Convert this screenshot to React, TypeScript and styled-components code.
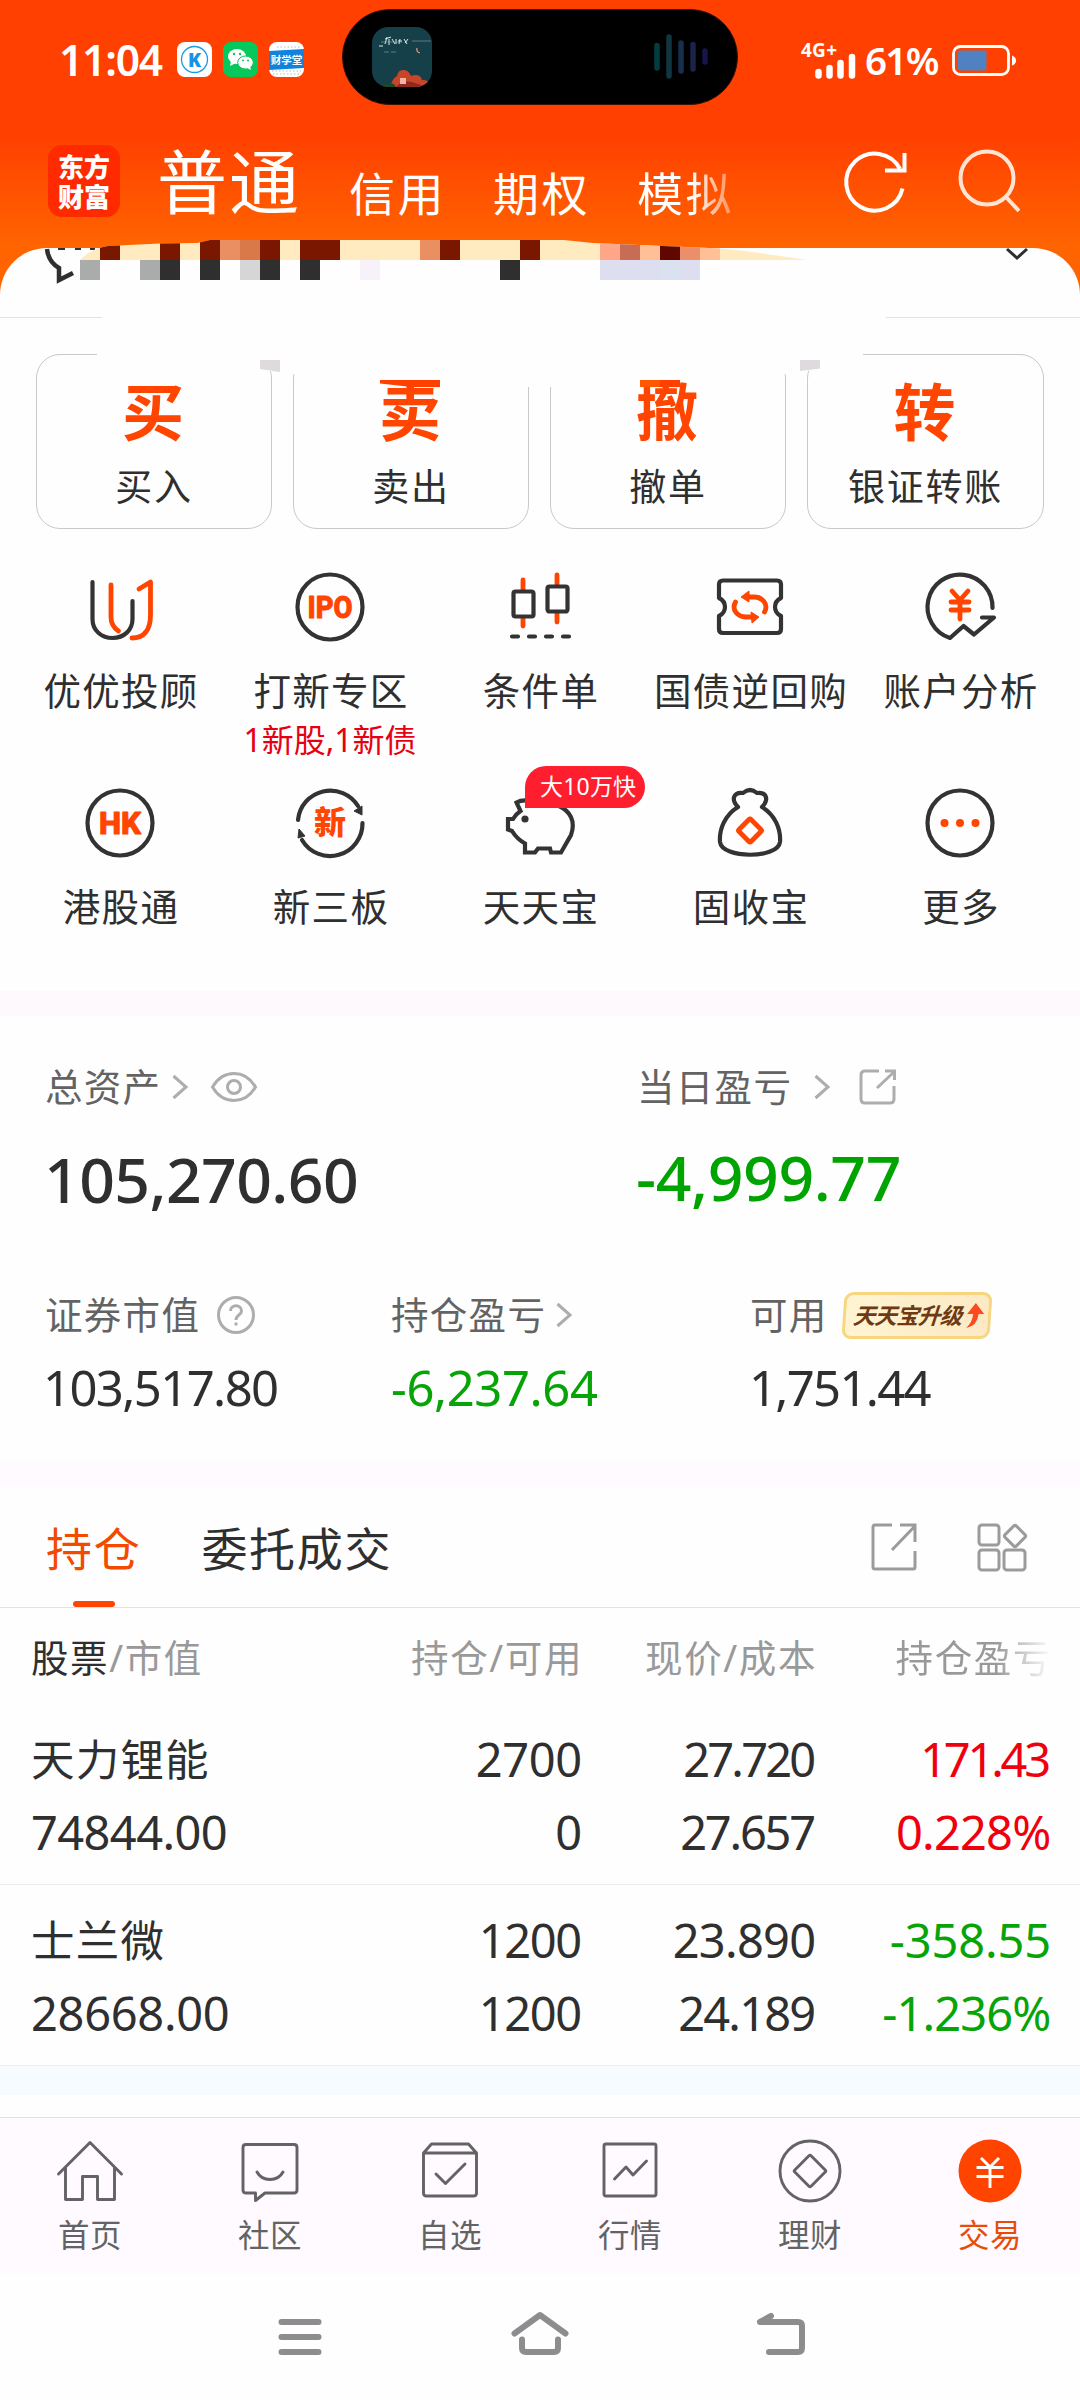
import React from "react";
import styled, { createGlobalStyle } from "styled-components";

const FONT = '"Noto Sans", "Noto Sans CJK SC", sans-serif';
const CJK = '"Noto Sans CJK SC", sans-serif';
const INK = "#2f2f2f";
const ORANGE = "#ff4500";
const GREEN = "#07a407";
const RED = "#f0000c";

const GlobalStyle = createGlobalStyle`
  * { box-sizing: border-box; }
  body { margin: 0; background: #fff; font-family: ${FONT}; color: ${INK}; }
`;

const Screen = styled.div`
  width: 1080px;
  height: 2400px;
  overflow: hidden;
  display: flex;
  flex-direction: column;
  background: linear-gradient(#ff4000 0, #ff4000 135px, #ff6400 245px, #ff6400 400px);
`;

const Text = styled.span<{ size: number; lh?: number; color?: string; weight?: number; ls?: number; dy?: number; dx?: number }>`
  display: block;
  white-space: nowrap;
  font-size: ${(p) => p.size}px;
  line-height: ${(p) => p.lh ?? 50}px;
  color: ${(p) => p.color ?? INK};
  font-weight: ${(p) => p.weight ?? 400};
  letter-spacing: ${(p) => p.ls ?? 0}px;
  margin-top: ${(p) => p.dy ?? 0}px;
  margin-bottom: ${(p) => -(p.dy ?? 0)}px;
  margin-left: ${(p) => p.dx ?? 0}px;
`;

/* ---------- status bar ---------- */
const StatusBar = styled.div`
  height: 105px;
  padding: 9px 64px 0 59px;
  display: flex;
  align-items: flex-start;
`;
const StatusLeft = styled.div`
  width: 283px;
  height: 101px;
  display: flex;
  align-items: center;
`;
const Clock = styled.div`
  width: 118px;
  font-size: 42.5px;
  font-weight: 600;
  letter-spacing: -1.2px;
  line-height: 60px;
  color: #fff;
`;
const AppIcon = styled.svg`
  width: 35px;
  height: 35px;
  margin-right: 11px;
`;
const Island = styled.div`
  width: 396px;
  height: 96px;
  border-radius: 48px;
  background: #000;
  border: 1px solid #3a1206;
  display: flex;
  align-items: center;
  justify-content: space-between;
  padding: 0 28px 0 29px;
`;
const StatusRight = styled.div`
  flex: 1;
  height: 101px;
  display: flex;
  align-items: center;
  justify-content: flex-end;
`;
const Signal = styled.svg`
  width: 56px;
  height: 40px;
  margin-right: 8px;
  overflow: visible;
`;
const Percent = styled.div`
  width: 73px;
  margin-right: 14px;
  font-size: 38.5px;
  font-weight: 600;
  letter-spacing: -1.7px;
  line-height: 60px;
  color: #fff;
`;

/* ---------- title bar ---------- */
const TitleBar = styled.div`
  height: 143px;
  display: flex;
  align-items: flex-start;
  padding: 40px 0 0 48px;
`;
const Logo = styled.div`
  flex: none;
  width: 72px;
  height: 72px;
  border-radius: 14px;
  background: #ff2a00;
  padding-top: 6px;
  text-align: center;
  font: 900 26px/30px ${CJK};
  color: #fff;
`;
const Modes = styled.div`
  flex: none;
  width: 679px;
  margin-left: 37px;
  display: flex;
  color: #fff;
`;
const MainMode = styled.div`
  width: 192px;
  font-size: 70px;
  line-height: 76px;
  letter-spacing: 2px;
  margin-top: -1px;
`;
const Mode = styled.div<{ fade?: boolean }>`
  width: 144px;
  font-size: 46px;
  line-height: 60px;
  letter-spacing: 2.5px;
  margin-top: 18px;
  ${(p) => p.fade && "color: transparent; background: linear-gradient(90deg, #fff 55px, rgba(255,255,255,.35) 95px); -webkit-background-clip: text; background-clip: text;"}
`;
const TitleIcon = styled.svg`
  width: 72px;
  height: 72px;
  margin-right: 40px;
  flex: none;
`;

/* ---------- white panel ---------- */
const Panel = styled.div`
  flex: 1;
  background: #fefefe;
  border-radius: 47px 47px 0 0;
  display: flex;
  flex-direction: column;
  position: relative;
`;
const NoticeRow = styled.div`
  height: 70px;
  display: flex;
  align-items: flex-end;
  justify-content: space-between;
`;
const Rule = styled.div<{ w: number }>`
  width: ${(p) => p.w}px;
  height: 1px;
  background: #e3e3e3;
`;
const Overlay = styled.svg`
  position: absolute;
  left: 0;
  top: -8px;
  width: 1080px;
  height: 160px;
`;
const Cards = styled.div`
  display: grid;
  grid-template-columns: 236px 236px 236px 237px;
  gap: 21px;
  padding: 36px 0 0 36px;
`;
const Card = styled.div`
  height: 175px;
  border: 1px solid #c9c9c9;
  border-radius: 24px;
  display: flex;
  flex-direction: column;
  align-items: center;
`;
const CardGlyph = styled.div`
  height: 70px;
  margin: 22px 2px 0 0;
  font: 600 62px/70px ${FONT};
  color: ${ORANGE};
`;
const CardLabel = styled.div`
  margin-top: 15px;
  font-size: 37px;
  line-height: 50px;
  letter-spacing: 1.7px;
`;

const Services = styled.div`
  height: 424px;
  margin-top: 38px;
  padding: 0 15px;
  display: grid;
  grid-template-columns: repeat(5, 210px);
  grid-auto-rows: 216px;
`;
const Service = styled.div`
  position: relative;
  display: flex;
  flex-direction: column;
  align-items: center;
`;
const ServiceIcon = styled.svg`
  width: 80px;
  height: 80px;
  margin-bottom: 20px;
`;
const Bubble = styled.div`
  position: absolute;
  left: 90px;
  top: -17px;
  width: 120px;
  height: 42px;
  border-radius: 21px 21px 21px 0;
  background: #ff1e2e;
  padding-left: 15px;
  font-size: 23px;
  line-height: 41px;
  letter-spacing: 0.2px;
  white-space: nowrap;
  color: #fff;
`;
const Band = styled.div<{ h: number; bg: string }>`
  height: ${(p) => p.h}px;
  background: ${(p) => p.bg};
`;

/* ---------- assets ---------- */
const Assets = styled.div`
  height: 445px;
  padding: 46px 0 0 45px;
`;
const AssetGrid = styled.div<{ cols: string; mt?: number }>`
  display: grid;
  grid-template-columns: ${(p) => p.cols};
  margin-top: ${(p) => p.mt ?? 0}px;
`;
const Label = styled.div`
  height: 50px;
  display: flex;
  align-items: center;
`;
const Glyph = styled.svg<{ w: number; h: number; ml: number }>`
  width: ${(p) => p.w}px;
  height: ${(p) => p.h}px;
  margin-left: ${(p) => p.ml}px;
  flex: none;
  overflow: visible;
`;
const Promo = styled.div`
  width: 148px;
  height: 47px;
  margin-left: 15px;
  padding-left: 7px;
  display: flex;
  align-items: center;
  border: 3px solid #f8d680;
  border-radius: 9px;
  background: linear-gradient(90deg, #fff4d2, #fde9c4);
  transform: skewX(-4deg);
`;
const PromoText = styled.span`
  width: 109px;
  font: italic 700 22.5px/40px ${FONT};
  letter-spacing: -0.8px;
  color: #6e3a12;
  white-space: nowrap;
`;

/* ---------- holdings ---------- */
const Tabs = styled.div`
  height: 121px;
  padding: 0 53px 0 46px;
  display: flex;
  border-bottom: 1px solid #e2e2e2;
`;
const Tab = styled.div<{ active?: boolean }>`
  display: flex;
  flex-direction: column;
  align-items: center;
  margin-right: 60px;
  padding-top: 31px;
  font-size: 46px;
  line-height: 60px;
  letter-spacing: 1.7px;
  color: ${(p) => (p.active ? "#f34a00" : INK)};
  &::after {
    content: "";
    width: 42px;
    height: 6px;
    margin-top: 23px;
    border-radius: 3px;
    background: ${(p) => (p.active ? "#ff4500" : "transparent")};
  }
`;
const TabTools = styled.div`
  margin-left: auto;
  padding-top: 35px;
  display: flex;
`;
const HoldRow = styled.div<{ head?: boolean }>`
  height: ${(p) => (p.head ? 96 : 181)}px;
  padding: ${(p) => (p.head ? "0" : "19px")} 31px 0;
  display: grid;
  grid-template-columns: 200px 349px 234px 235px;
  border-bottom: ${(p) => (p.head ? 0 : 1)}px solid #ebebed;
`;
const Cell = styled.div<{ left?: boolean }>`
  display: flex;
  flex-direction: column;
  align-items: ${(p) => (p.left ? "flex-start" : "flex-end")};
`;
const HeadText = styled.div<{ fade?: boolean }>`
  font-size: 37.5px;
  line-height: 99px;
  letter-spacing: 1.6px;
  margin-right: -3px;
  white-space: nowrap;
  color: #9a9999;
  ${(p) => p.fade && "color: transparent; background: linear-gradient(90deg, #9a9999 100px, rgba(154,153,153,.1) 150px); -webkit-background-clip: text; background-clip: text;"}
  b { font-weight: 400; color: ${INK}; }
`;
const Figure = styled.div<{ ls: number; color?: string }>`
  font-size: 47px;
  line-height: 73px;
  white-space: nowrap;
  color: ${(p) => p.color ?? INK};
  letter-spacing: ${(p) => p.ls}px;
  margin-right: ${(p) => -p.ls - 2.2}px;
`;

/* ---------- bottom bars ---------- */
const TabBar = styled.div`
  height: 156px;
  border-top: 1px solid #e4e1e4;
  background: #fefaff;
  display: grid;
  grid-template-columns: repeat(6, 180px);
`;
const NavItem = styled.div<{ active?: boolean }>`
  display: flex;
  flex-direction: column;
  align-items: center;
  padding-top: 13px;
  font-size: 31.5px;
  line-height: 50px;
  letter-spacing: 0.6px;
  color: ${(p) => (p.active ? "#e84d08" : "#636363")};
`;
const NavIcon = styled.svg`
  width: 80px;
  height: 80px;
  margin-bottom: -1px;
`;
const SystemNav = styled.div`
  height: 127px;
  padding: 24px 260px 0;
  display: flex;
  justify-content: space-between;
`;

const dark = { fill: "none", stroke: "#333", strokeWidth: 4.2, strokeLinecap: "round" as const, strokeLinejoin: "round" as const };
const hot = { ...dark, stroke: ORANGE, strokeWidth: 4.8 };
const grey = { fill: "none", stroke: "#adadad", strokeWidth: 3 };
const nav = { fill: "none", stroke: "#636363", strokeWidth: 2.9, strokeLinejoin: "round" as const, strokeLinecap: "round" as const };
const boldText = { fill: ORANGE, fontWeight: 800, textAnchor: "middle" as const };

const U = (
  <g>
    <path {...dark} d="M-27.500 -25V12C-27.500 24 -18 31 -7.500 31C4 31 12.500 23 12.500 12V-6" />
    <path {...hot} d="M-9 -22V10C-9 17 -6 21 -1.500 24" />
    <path {...hot} d="M19 -18L30.500 -25V8C30.500 23 24 31 12 31" />
  </g>
);
const Ipo = (
  <g>
    <circle {...dark} r="32.500" />
    <text {...boldText} fontFamily="Roboto" fontSize="31" y="11" textLength="45" lengthAdjust="spacingAndGlyphs" stroke={ORANGE} strokeWidth="1" strokeLinejoin="round">IPO</text>
  </g>
);
const Candles = (
  <g>
    <path {...hot} d="M-17 -27V-17M-17 11V19M17 -32V-22M17 6V15" />
    <rect {...dark} x="-26.500" y="-15.500" width="20" height="25" rx="2" />
    <rect {...dark} x="7.500" y="-20.500" width="20" height="25" rx="2" />
    <path {...dark} d="M-28 29.500H-22M-11 29.500H-5M6 29.500H12M23 29.500H29" />
  </g>
);
const Ticket = (
  <g>
    <path {...dark} d="M-27 -26.500H27Q31 -26.500 31 -22.500V-9C23 -5 23 5 31 9V22Q31 26 27 26H-27Q-31 26 -31 22V9C-23 5 -23 -5 -31 -9V-22.500Q-31 -26.500 -27 -26.500Z" />
    <path {...hot} d="M-14.500 -5C-19 3 -12 10 -4 10H3M14.500 5C19 -3 12 -10 4 -10H-3" />
    <path fill={ORANGE} stroke={ORANGE} strokeLinejoin="round" d="M1 5L9 10L2 16ZM-1 -5L-9 -10L-1 -16Z" />
  </g>
);
const Account = (
  <g>
    <path {...dark} d="M32.500 1A32.500 32.500 0 1 0 -10 31L3.500 19L14 27.500L34 10.500H22" />
    <path {...hot} d="M-8 -16L0 -7L8 -16M0 -7V12M-9 -5H9M-9 3H9" />
  </g>
);
const Hk = (
  <g>
    <circle {...dark} r="32.500" />
    <text {...boldText} fontFamily="Roboto" fontSize="31" y="11" textLength="42" lengthAdjust="spacingAndGlyphs" stroke={ORANGE} strokeWidth="1" strokeLinejoin="round">HK</text>
  </g>
);
const Xin = (
  <g>
    <path {...dark} d="M-32 -3A32.500 32.500 0 0 1 28 -17M32.500 0A32.500 32.500 0 0 1 -28 17" />
    <path fill="#333" stroke="#333" d="M24 -12L32 -17V-8ZM-32 15L-31 6L-25 13Z" />
    <text {...boldText} fontFamily="Noto Sans CJK SC" fontSize="32" y="11">新</text>
  </g>
);
const Pig = (
  <g>
    <path {...dark} strokeLinejoin="miter" d="M-12 -22.500C-18 -23 -21 -22 -23.500 -20.500L-19.500 -12Q-24 -9 -27 -4H-32V6.500L-28 8Q-23 16 -15 20.500V29.500H-5L-2 25.500H10L11 29.500H21L31 12C36 -2 30 -12 19 -17" />
    <circle cx="-15" cy="-4" r="3.600" fill="#333" />
  </g>
);
const Bag = (
  <g>
    <path {...dark} d="M-12 -16C-19 -23 -17 -31 -7 -30Q0 -36 7 -30C17 -31 19 -23 12 -16C25 -8 31 6 30 19C28 36 -28 36 -30 19C-31 6 -25 -8 -12 -16" />
    <rect {...hot} x="-8.500" y="-8.500" width="17" height="17" rx="1.500" transform="translate(0 7.500) rotate(45)" />
  </g>
);
const More = (
  <g>
    <circle {...dark} r="32.500" />
    <g fill={ORANGE}><circle cx="-15.500" r="4" /><circle r="4" /><circle cx="15.500" r="4" /></g>
  </g>
);

const services = [
  { icon: U, label: "优优投顾" },
  { icon: Ipo, label: "打新专区", sub: "1新股,1新债" },
  { icon: Candles, label: "条件单" },
  { icon: Ticket, label: "国债逆回购" },
  { icon: Account, label: "账户分析" },
  { icon: Hk, label: "港股通" },
  { icon: Xin, label: "新三板" },
  { icon: Pig, label: "天天宝", badge: "大10万快" },
  { icon: Bag, label: "固收宝" },
  { icon: More, label: "更多" },
];

const cards = [["买", "买入"], ["卖", "卖出"], ["撤", "撤单"], ["转", "银证转账"]];

/* each figure is paired with its tracking */
type Fig = [string, number];
const holdings: { name: string; value: Fig; cols: [Fig, Fig, string?][] }[] = [
  {
    name: "天力锂能",
    value: ["74844.00", -0.6],
    cols: [
      [["2700", -0.4], ["0", 0]],
      [["27.720", -2.8], ["27.657", -2.2]],
      [["171.43", -3.2], ["0.228%", -0.8], RED],
    ],
  },
  {
    name: "士兰微",
    value: ["28668.00", -0.3],
    cols: [
      [["1200", -1.4], ["1200", -1.4]],
      [["23.890", -0.7], ["24.189", -1.8]],
      [["-358.55", -0.1], ["-1.236%", -0.9], GREEN],
    ],
  },
];

const navItems = [
  { label: "首页", icon: <path {...nav} d="M-31.500 3L0 -28.500L31.500 3M-24.500 -3V28.500H-7.500V5.500H7.500V28.500H24.500V-3" /> },
  { label: "社区", icon: <path {...nav} d="M-24 -26.500H24Q27 -26.500 27 -23.500V19Q27 22 24 22H-5L-14.500 29.500V22H-24Q-27 22 -27 19V-23.500Q-27 -26.500 -24 -26.500ZM-13 1Q-9 8.500 0 8.500Q9 8.500 13 1" /> },
  { label: "自选", icon: <path {...nav} d="M-26.500 -18L-18.500 -27H18.500L26.500 -18V22Q26.500 25 23.500 25H-23.500Q-26.500 25 -26.500 22ZH26.500M-14 3L-4.500 12.500L15 -7" /> },
  { label: "行情", icon: <path {...nav} d="M-24 -27H24Q26 -27 26 -25V23Q26 25 24 25H-24Q-26 25 -26 23V-25Q-26 -27 -24 -27ZM-15.500 8L-4 -4L3 4L16.500 -10" /> },
  { label: "理财", icon: <g {...nav}><circle r="30" /><rect x="-11.500" y="-11.500" width="23" height="23" rx="1.500" transform="rotate(45)" /></g> },
  { label: "交易", active: true, icon: <g><circle r="31.500" fill="#ff4400" /><path {...nav} stroke="#fff" strokeLinecap="butt" d="M-9 -13L0 -4L9 -13M0 -4V17M-13.500 -3.500H13.500M-13.500 5.500H13.500" /></g> },
];

const D = "#7a1700", O1 = "#ea8f62", O2 = "#d97848";
const mosaicTop: [number, number, string][] = [
  [100, 20, D], [160, 20, D], [200, 20, D], [220, 20, O1], [240, 20, O2], [260, 20, D], [300, 40, D], [420, 20, O1], [440, 20, D], [520, 20, D],
  [600, 20, "#ffa588"], [620, 20, "#c86d55"], [640, 20, "#ffc098"], [660, 20, "#600800"], [680, 20, "#ea8f6a"], [700, 20, "#ffc098"],
];
const mosaicBottom: [number, number, string][] = [
  [80, 20, "#a9acab"], [140, 20, "#a9acab"], [160, 20, INK], [200, 20, INK], [240, 20, "#d6d6d6"], [260, 20, INK], [300, 20, INK],
  [360, 20, "#f7f2fa"], [500, 20, INK], [600, 100, "#dddef0"], [660, 20, "#dae2f0"],
];

function Mosaic() {
  return (
    <Overlay viewBox="0 240 1080 160">
      <defs>
        <clipPath id="arc">
          <path d="M80 260Q90 249 108 246L160 243.500L197 243L210 240H564L593 243L720 248.500L745 251L808 260Z" />
        </clipPath>
      </defs>
      <g stroke={INK} strokeWidth="4.500" fill="none">
        <path d="M47 249C48 258 52 264 59 268V280L73 273" />
        <path strokeWidth="3" d="M1007 249L1017 258L1027 249" />
        <path strokeWidth="2" d="M58 249H65M75 249H81M90 249H95" />
      </g>
      <g clipPath="url(#arc)" shapeRendering="crispEdges">
        <rect x="80" y="240" width="730" height="20" fill="#ffebbf" />
        {mosaicTop.map(([x, w, c]) => <rect key={x} x={x} y="240" width={w} height="20" fill={c} />)}
      </g>
      <g shapeRendering="crispEdges">
        {mosaicBottom.map(([x, w, c]) => <rect key={x} x={x} y="260" width={w} height="20" fill={c} />)}
      </g>
      <path fill="#fefefe" d="M97 350V356L260 370L294 374L380 383H440V387H640L700 380L786 374L820 369L863 358V350Z" />
      <path fill="#dedadd" d="M260 360H280V372L260 369ZM800 360H820V368.500L800 371Z" />
      <path fill="#ff4000" d="M380 380H440V387H412L380 383.500Z" />
      <path fill="#ff5800" d="M640 380H660V387H640Z" />
      <path fill="#ff4000" d="M660 380H680V387H660Z" />
    </Overlay>
  );
}

const Chevron = ({ ml }: { ml: number }) => (
  <Glyph w={16} h={26} ml={ml} viewBox="0 0 16 26"><path {...grey} d="M1.500 2L14 13L1.500 24" /></Glyph>
);

export default function App() {
  return (
    <Screen>
      <GlobalStyle />
      <StatusBar>
        <StatusLeft>
          <Clock>11:04</Clock>
          <AppIcon viewBox="0 0 35 35">
            <rect width="35" height="35" rx="8" fill="#fff" />
            <circle cx="17.500" cy="17.500" r="13" fill="none" stroke="#1d9be0" strokeWidth="1.300" />
            <text x="17.500" y="24.500" fontSize="19" fontWeight="800" fontFamily="Open Sans" fill="#1593e4" textAnchor="middle">K</text>
          </AppIcon>
          <AppIcon viewBox="0 0 35 35">
            <rect width="35" height="35" rx="8" fill="#07c85a" />
            <g fill="#fff">
              <ellipse cx="14" cy="14.500" rx="9" ry="7.500" /><path d="M8 19L7 24L13 21Z" />
              <ellipse cx="22.500" cy="20.500" rx="7.800" ry="6.500" stroke="#07c85a" strokeWidth="1" /><path d="M24 26L28 28L27 24Z" />
            </g>
            <g fill="#07c85a"><circle cx="11" cy="12" r="1.200" /><circle cx="17" cy="12" r="1.200" /><circle cx="20" cy="18.500" r="1" /><circle cx="25" cy="18.500" r="1" /></g>
          </AppIcon>
          <AppIcon viewBox="0 0 35 35">
            <rect width="35" height="35" rx="8" fill="#fff" />
            <path stroke="#bbb" strokeWidth="1" strokeDasharray="1.500 2" d="M3 29H32M4 32H30M8 5H32" />
            <path fill="#1282dc" d="M0 9L35 7V26L0 28Z" />
            <text x="17.500" y="22" fontSize="10.500" fontWeight="700" fontFamily="Noto Sans CJK SC" fill="#fff" textAnchor="middle">财学堂</text>
          </AppIcon>
        </StatusLeft>
        <Island>
          <svg width="60" height="60" viewBox="0 0 60 60">
            <defs><clipPath id="album"><rect width="60" height="60" rx="16" /></clipPath></defs>
            <g clipPath="url(#album)">
              <rect width="60" height="60" fill="#153f49" />
              <path fill="#c9452a" d="M18 60Q20 52 25 49Q26 43 31 43Q36 42 39 49Q48 46 50 53Q58 52 57 60Z" />
              <path fill="#8d2a20" d="M24 60Q30 53 40 55L55 60Z" />
              <path fill="#1d4a24" d="M8 60Q14 54 22 57L24 60Z" />
              <rect x="28" y="51" width="6" height="6" fill="#f3b2a5" />
              <path stroke="#dfe8e8" strokeWidth="1" fill="none" d="M13 12L19 10M15 10L13 17M17 12V18M20 12L23 17M24 12V17M28 12L27 17M26 14H30M32 12L35 17M33 16L36 12M7 19H11" />
              <path stroke="#8fa5a8" strokeWidth=".6" d="M12 25H17M19 25H24M9 15H30M40 14H59" />
              <path stroke="#e6a08a" strokeWidth="1.200" fill="none" d="M45 21Q44 25 48 26" />
            </g>
          </svg>
          <svg width="56" height="50" viewBox="0 0 56 50" fill="none" strokeWidth="5.500" strokeLinecap="round">
            <path stroke="#023e40" d="M4 13.500V36" /><path stroke="#103741" d="M16 5V44" /><path stroke="#172f4c" d="M28 11V39" />
            <path stroke="#1b2347" d="M40 12.500V37" /><path stroke="#17154c" d="M52 19V30" />
          </svg>
        </Island>
        <StatusRight>
          <Signal viewBox="0 0 56 40">
            <text x="0" y="16.500" fontSize="19" fontWeight="700" fontFamily="Open Sans" fill="#fff" textLength="36">4G+</text>
            <path stroke="#fff" strokeWidth="6.500" strokeLinecap="round" d="M17.500 32V35.500M28.500 28V35.500M39.500 23V35.500M51 17V35.500" />
          </Signal>
          <Percent>61%</Percent>
          <svg width="64" height="32" viewBox="0 0 64 32">
            <rect x="1.500" y="2.500" width="55" height="28" rx="7" fill="none" stroke="#fff" strokeWidth="2.800" />
            <rect x="6" y="6.500" width="28.500" height="20" rx="2" fill="#5081c2" />
            <path fill="#fff" d="M60 11.500Q64 13 64 16.500Q64 20 60 21.500Z" />
          </svg>
        </StatusRight>
      </StatusBar>

      <TitleBar>
        <Logo>东方<br />财富</Logo>
        <Modes>
          <MainMode>普通</MainMode>
          <Mode>信用</Mode>
          <Mode>期权</Mode>
          <Mode fade>模拟</Mode>
        </Modes>
        <TitleIcon viewBox="-36 -36 72 72" fill="none" stroke="#fff" strokeWidth="4">
          <path d="M24.500 -13A28.500 28.500 0 1 0 27 6.500" transform="translate(3.500 1)" />
          <path d="M32.500 -28V-10.500H13" />
        </TitleIcon>
        <TitleIcon viewBox="-36 -36 72 72" fill="none" stroke="#ffe4d4" strokeWidth="4">
          <circle cx="3" cy="-3" r="26.500" />
          <path d="M22 16L35 30" />
        </TitleIcon>
      </TitleBar>

      <Panel>
        <NoticeRow><Rule w={102} /><Rule w={194} /></NoticeRow>
        <Cards>
          {cards.map(([g, t]) => (
            <Card key={t}><CardGlyph>{g}</CardGlyph><CardLabel>{t}</CardLabel></Card>
          ))}
        </Cards>
        <Mosaic />

        <Services>
          {services.map((s) => (
            <Service key={s.label}>
              <ServiceIcon viewBox="-40 -40 80 80">{s.icon}</ServiceIcon>
              <Text size={37.500} ls={1.300} dy={-1} dx={2}>{s.label}</Text>
              {s.sub && <Text size={32} lh={45} color="#e60012">{s.sub}</Text>}
              {s.badge && <Bubble>{s.badge}</Bubble>}
            </Service>
          ))}
        </Services>

        <Band h={25} bg="#fdf9fd" />

        <Assets>
          <AssetGrid cols="592px 1fr">
            <Label>
              <Text size={37.500} ls={1.300} color="#636363">总资产</Text>
              <Chevron ml={11} />
              <Glyph w={46} h={32} ml={23} viewBox="-23 -16 46 32">
                <path {...grey} d="M-21.500 0C-11 -18 11 -18 21.500 0C11 18 -11 18 -21.500 0Z" /><circle {...grey} r="6.500" />
              </Glyph>
            </Label>
            <Label>
              <Text size={37.500} ls={1.300} color="#636363">当日盈亏</Text>
              <Chevron ml={22} />
              <Glyph w={37} h={36} ml={29} viewBox="0 0 37 36">
                <path {...grey} d="M20 2H6Q2 2 2 6V30Q2 34 6 34H31Q35 34 35 30V17M18 19L35 3M26 2H35.500V11" />
              </Glyph>
            </Label>
          </AssetGrid>
          <AssetGrid cols="592px 1fr" mt={33}>
            <Text size={62.500} lh={70} weight={500} ls={-0.600} dy={-1} dx={-1}>105,270.60</Text>
            <Text size={62.500} lh={70} weight={500} ls={-0.400} dy={-3} dx={-1} color="#00a400">-4,999.77</Text>
          </AssetGrid>
          <AssetGrid cols="345px 360px 1fr" mt={75}>
            <Label>
              <Text size={37.500} ls={1.300} color="#636363">证券市值</Text>
              <Glyph w={38} h={38} ml={17} viewBox="-19 -19 38 38">
                <circle {...grey} r="17.500" />
                <path {...grey} d="M-5.500 -4C-5.500 -11 5.500 -11 5.500 -4C5.500 0 0 0 0 5M0 7.500V10.500" />
              </Glyph>
            </Label>
            <Label>
              <Text size={37.500} ls={1.300} color="#636363" dx={1}>持仓盈亏</Text>
              <Chevron ml={10} />
            </Label>
            <Label>
              <Text size={37.500} ls={1.300} color="#636363">可用</Text>
              <Promo>
                <PromoText>天天宝升级</PromoText>
                <svg width="22" height="28" viewBox="0 0 22 28"><path fill="#fb4a20" d="M13 1L22 12H16.500Q16 24 5 26Q11 20 11 12H5Z" /></svg>
              </Promo>
            </Label>
          </AssetGrid>
          <AssetGrid cols="345px 360px 1fr" mt={23}>
            <Text size={49} ls={-1.600} dy={-1} dx={-2}>103,517.80</Text>
            <Text size={49} ls={-0.400} dy={-1} dx={1} color={GREEN}>-6,237.64</Text>
            <Text size={49} ls={-1.700} dy={-1} dx={-1}>1,751.44</Text>
          </AssetGrid>
        </Assets>

        <Band h={26} bg="#fefaff" />

        <Tabs>
          <Tab active>持仓</Tab>
          <Tab>委托成交</Tab>
          <TabTools>
            <Glyph w={46} h={50} ml={0} viewBox="0 0 46 50">
              <path {...grey} stroke="#9b9b9b" d="M21 3H4Q2 3 2 5V45Q2 47 4 47H42Q44 47 44 45V29M21 28L44 4M29 3H44V20" />
            </Glyph>
            <Glyph w={50} h={50} ml={60} viewBox="0 0 50 50">
              <g {...grey} stroke="#9b9b9b">
                <rect x="2" y="3" width="20" height="20" rx="3" /><rect x="2" y="28" width="20" height="20" rx="3" />
                <rect x="27" y="28" width="21" height="20" rx="3" /><rect x="-8" y="-8" width="16" height="16" rx="2" transform="translate(38 14) rotate(45)" />
              </g>
            </Glyph>
          </TabTools>
        </Tabs>

        <HoldRow head>
          <Cell left><HeadText><b>股票</b>/市值</HeadText></Cell>
          <Cell><HeadText>持仓/可用</HeadText></Cell>
          <Cell><HeadText>现价/成本</HeadText></Cell>
          <Cell><HeadText fade>持仓盈亏</HeadText></Cell>
        </HoldRow>
        {holdings.map((h) => (
          <HoldRow key={h.name}>
            <Cell left>
              <Text size={43.500} lh={73} ls={1.200}>{h.name}</Text>
              <Figure ls={h.value[1]}>{h.value[0]}</Figure>
            </Cell>
            {h.cols.map(([a, b, color], i) => (
              <Cell key={i}>
                <Figure ls={a[1]} color={color}>{a[0]}</Figure>
                <Figure ls={b[1]} color={color}>{b[0]}</Figure>
              </Cell>
            ))}
          </HoldRow>
        ))}
        <Band h={29} bg="#f5fbff" />
        <Band h={22} bg="#fefefe" />

        <TabBar>
          {navItems.map((n) => (
            <NavItem key={n.label} active={n.active}>
              <NavIcon viewBox="-40 -40 80 80">{n.icon}</NavIcon>
              {n.label}
            </NavItem>
          ))}
        </TabBar>
        <SystemNav>
          {[
            "M-18.500 -15H18.500M-18.500 0H18.500M-18.500 15H18.500",
            "M-25.500 -3.500L0 -22L25.500 -3.500M-18 2.500V11Q-18 15 -14 15H14Q18 15 18 11V2.500",
            "M-9 -21L-20 -15H18Q22 -15 22 -11V11Q22 15 18 15H-11",
          ].map((d) => (
            <svg key={d} width="80" height="80" viewBox="-40 -40 80 80">
              <path d={d} fill="none" stroke="#8e8c8f" strokeWidth="6" strokeLinecap="round" strokeLinejoin="round" />
            </svg>
          ))}
        </SystemNav>
      </Panel>
    </Screen>
  );
}
